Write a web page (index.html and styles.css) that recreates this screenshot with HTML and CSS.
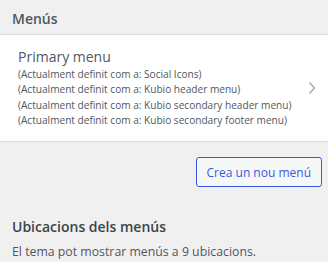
FILE: index.html
```html
<!DOCTYPE html>
<html lang="ca">
<head>
    <meta charset="UTF-8">
    <meta name="viewport" content="width=device-width, initial-scale=1.0">
    <title>Menús</title>
<link rel="stylesheet" href="styles.css">
</head>
<body>
    <div class="sec-head">Menús</div>
    <div class="menu-item">
        <div class="menu-text">
            <h3 class="menu-name">Primary menu</h3>
            <p class="menu-loc">(Actualment definit com a: Social Icons)</p>
            <p class="menu-loc">(Actualment definit com a: Kubio header menu)</p>
            <p class="menu-loc">(Actualment definit com a: Kubio secondary header menu)</p>
            <p class="menu-loc">(Actualment definit com a: Kubio secondary footer menu)</p>
        </div>
        <svg class="chev" width="8" height="14" viewBox="0 0 8 14"><path d="M1.5 1.5 L6.5 7 L1.5 12.5" fill="none" stroke="#a7aaad" stroke-width="1.5"/></svg>
    </div>
    <div class="btn-row">
        <button class="new-btn">Crea un nou menú</button>
    </div>
    <div class="locs">
        <h3 class="locs-title">Ubicacions dels menús</h3>
        <p class="locs-text">El tema pot mostrar menús a 9 ubicacions.</p>
    </div>
</body>
</html>
```

FILE: styles.css
```css
*{
    margin:0;
    padding:0;
    box-sizing:border-box;
}
body{
    width:328px;
    height:262px;
    overflow:hidden;
    background:#f0f0f1;
    font-family:"Open Sans","Noto Sans",sans-serif;
    color:#50575e;
}
.sec-head{
    height:35px;
    padding:10px 12px 0;
    font-size:14px;
    font-weight:600;
    line-height:18px;
    border-bottom:1px solid #dcdcde;
}
.menu-item{
    background:#fff;
    border-bottom:1px solid #dcdcde;
    padding:12px 12px 13px 18px;
    display:flex;
    align-items:center;
    justify-content:space-between;
}
.menu-name{
    font-size:14px;
    font-weight:500;
    line-height:20px;
}
.menu-loc{
    font-size:10.1px;
    line-height:15.3px;
    color:#50575e;
}
.chev{
    display:block;
}
.btn-row{
    display:flex;
    justify-content:flex-end;
    padding:15px 6px 0;
}
.new-btn{
    height:30px;
    padding:0 10px;
    font-family:inherit;
    font-size:12px;
    color:#3858e9;
    background:#f6f7f7;
    border:1px solid #3858e9;
    border-radius:3px;
}
.locs{
    padding:30px 12px 0;
}
.locs-title{
    font-size:14px;
    font-weight:600;
    line-height:20px;
    color:#3c434a;
}
.locs-text{
    margin-top:6px;
    font-size:12.3px;
    line-height:18px;
    color:#50575e;
}
```
